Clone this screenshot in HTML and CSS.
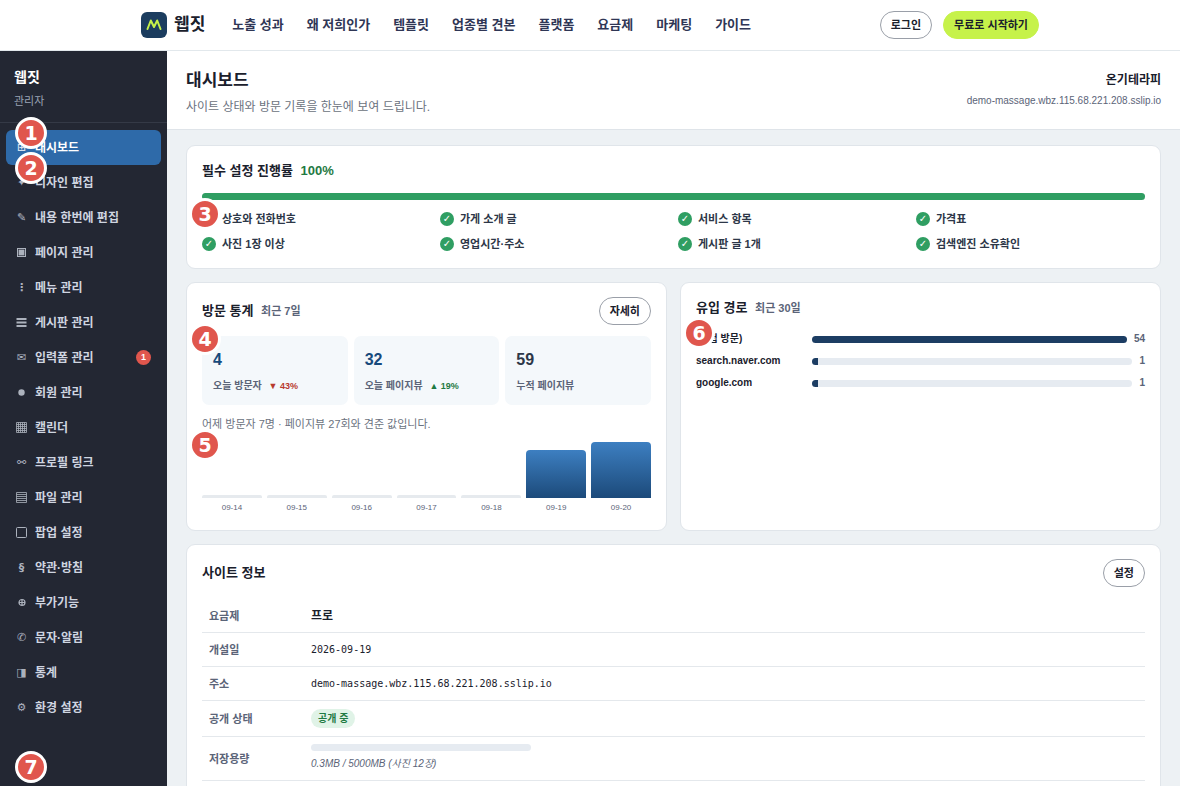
FILE: index.html
```html
<!DOCTYPE html>
<html lang="ko">
<head>
    <meta charset="UTF-8">
    <meta name="viewport" content="width=device-width, initial-scale=1.0">
    <title>대시보드 - 웹짓</title>
    <link rel="stylesheet" href="styles.css">
</head>
<body>
<header class="topbar">
    <div class="topbar-inner">
        <a class="brand" href="#">
            <svg class="brand-logo" viewBox="0 0 26 26" aria-hidden="true">
                <rect width="26" height="26" rx="6" fill="#1c3d5f"/>
                <path d="M6.5 17 L9.8 8.5 L13 15 L16.2 8.5 L19.5 17" fill="none" stroke="#c6f24a" stroke-width="2" stroke-linecap="round" stroke-linejoin="round"/>
            </svg>
            웹짓
        </a>
        <nav class="topnav">
            <a href="#">노출 성과</a>
            <a href="#">왜 저희인가</a>
            <a href="#">템플릿</a>
            <a href="#">업종별 견본</a>
            <a href="#">플랫폼</a>
            <a href="#">요금제</a>
            <a href="#">마케팅</a>
            <a href="#">가이드</a>
        </nav>
        <div class="topbar-actions">
            <a class="btn" href="#">로그인</a>
            <a class="btn btn-lime" href="#">무료로 시작하기</a>
        </div>
    </div>
</header>

<div class="layout">
    <aside class="sidebar">
        <div class="sidebar-head">
            <strong>웹짓</strong>
            <span>관리자</span>
        </div>
        <nav class="menu">
            <a class="active" href="#"><i>⊞</i>대시보드<b class="marker">1</b></a>
            <a href="#"><i>✦</i>디자인 편집<b class="marker">2</b></a>
            <a href="#"><i>✎</i>내용 한번에 편집</a>
            <a href="#">
                <i><svg viewBox="0 0 11 11"><rect x="1.5" y="1.5" width="8" height="8" fill="none" stroke="currentColor"/><rect x="2.6" y="2.6" width="5.8" height="5.8" fill="currentColor"/></svg></i>페이지 관리
            </a>
            <a href="#"><i>⋮</i>메뉴 관리</a>
            <a href="#">
                <i><svg viewBox="0 0 11 11"><path d="M.5 2h10M.5 5.5h10M.5 9h10" stroke="currentColor" stroke-width="2"/></svg></i>게시판 관리
            </a>
            <a href="#"><i>✉</i>입력폼 관리<span class="count">1</span></a>
            <a href="#">
                <i><svg viewBox="0 0 11 11"><circle cx="5.5" cy="5.5" r="3.2" fill="currentColor"/></svg></i>회원 관리
            </a>
            <a href="#">
                <i><svg viewBox="0 0 11 11"><path d="M.5 .5h10v10h-10zM2.5 .5v10M4.5 .5v10M6.5 .5v10M8.5 .5v10M.5 2.5h10M.5 4.5h10M.5 6.5h10M.5 8.5h10" fill="none" stroke="currentColor" stroke-width=".8"/></svg></i>캘린더
            </a>
            <a href="#"><i>⚯</i>프로필 링크</a>
            <a href="#">
                <i><svg viewBox="0 0 11 11"><path d="M.5 .5h10v10h-10zM.5 2.5h10M.5 4.5h10M.5 6.5h10M.5 8.5h10" fill="none" stroke="currentColor" stroke-width=".8"/></svg></i>파일 관리
            </a>
            <a href="#">
                <i><svg viewBox="0 0 11 11"><rect x=".5" y=".5" width="10" height="10" rx="1" fill="none" stroke="currentColor"/></svg></i>팝업 설정
            </a>
            <a href="#"><i>§</i>약관·방침</a>
            <a href="#">
                <i><svg viewBox="0 0 11 11"><path d="M9 5.5a3 3 0 1 1-6 0a3 3 0 1 1 6 0zM6 2.5v6M3 5.5h6" fill="none" stroke="currentColor" stroke-width="1.2"/></svg></i>부가기능
            </a>
            <a href="#"><i>✆</i>문자·알림</a>
            <a href="#"><i>◨</i>통계</a>
            <a href="#"><i>⚙</i>환경 설정</a>
        </nav>
        <div class="sidebar-foot"><b class="marker">7</b></div>
    </aside>

    <main class="main">
        <div class="page-head">
            <div>
                <h1>대시보드</h1>
                <p>사이트 상태와 방문 기록을 한눈에 보여 드립니다.</p>
            </div>
            <div class="site">
                <strong>온기테라피</strong>
                <a href="#">demo-massage.wbz.115.68.221.208.sslip.io</a>
            </div>
        </div>

        <div class="content">
            <section class="card">
                <h2>필수 설정 진행률 <em>100%</em></h2>
                <div class="progress"><div style="width: 100%"></div></div>
                <div class="anchor">
                    <ul class="checks">
                        <li>상호와 전화번호</li>
                        <li>가게 소개 글</li>
                        <li>서비스 항목</li>
                        <li>가격표</li>
                        <li>사진 1장 이상</li>
                        <li>영업시간·주소</li>
                        <li>게시판 글 1개</li>
                        <li>검색엔진 소유확인</li>
                    </ul>
                    <b class="marker">3</b>
                </div>
            </section>

            <div class="columns">
                <section class="card">
                    <div class="card-head">
                        <h2>방문 통계 <small>최근 7일</small></h2>
                        <a class="btn" href="#">자세히</a>
                    </div>
                    <div class="anchor">
                        <div class="stats">
                            <div class="stat">
                                <strong class="blue">4</strong>
                                <span>오늘 방문자 <em class="down">▼ 43%</em></span>
                            </div>
                            <div class="stat">
                                <strong class="blue">32</strong>
                                <span>오늘 페이지뷰 <em class="up">▲ 19%</em></span>
                            </div>
                            <div class="stat">
                                <strong>59</strong>
                                <span>누적 페이지뷰</span>
                            </div>
                        </div>
                        <b class="marker">4</b>
                    </div>
                    <p class="note">어제 방문자 7명 · 페이지뷰 27회와 견준 값입니다.</p>
                    <div class="anchor">
                        <div class="chart">
                            <div class="day"><div class="bar empty"></div><span>09-14</span></div>
                            <div class="day"><div class="bar empty"></div><span>09-15</span></div>
                            <div class="day"><div class="bar empty"></div><span>09-16</span></div>
                            <div class="day"><div class="bar empty"></div><span>09-17</span></div>
                            <div class="day"><div class="bar empty"></div><span>09-18</span></div>
                            <div class="day"><div class="bar" style="height: 48px"></div><span>09-19</span></div>
                            <div class="day"><div class="bar" style="height: 56px"></div><span>09-20</span></div>
                        </div>
                        <b class="marker">5</b>
                    </div>
                </section>

                <section class="card">
                    <h2>유입 경로 <small>최근 30일</small></h2>
                    <div class="anchor">
                        <ul class="sources">
                            <li><span>(직접 방문)</span><div class="track"><div style="width: 100%"></div></div><b>54</b></li>
                            <li><span>search.naver.com</span><div class="track"><div style="width: 2%"></div></div><b>1</b></li>
                            <li><span>google.com</span><div class="track"><div style="width: 2%"></div></div><b>1</b></li>
                        </ul>
                        <b class="marker">6</b>
                    </div>
                </section>
            </div>

            <section class="card">
                <div class="card-head">
                    <h2>사이트 정보</h2>
                    <a class="btn" href="#">설정</a>
                </div>
                <table class="info">
                    <tr><th scope="row">요금제</th><td><strong>프로</strong></td></tr>
                    <tr><th scope="row">개설일</th><td><code>2026-09-19</code></td></tr>
                    <tr><th scope="row">주소</th><td><code>demo-massage.wbz.115.68.221.208.sslip.io</code></td></tr>
                    <tr><th scope="row">공개 상태</th><td><span class="badge">공개 중</span></td></tr>
                    <tr><th scope="row">저장용량</th><td><div class="storage"></div><em>0.3MB / 5000MB (사진 12장)</em></td></tr>
                </table>
            </section>
        </div>
    </main>
</div>
</body>
</html>
```
FILE: styles.css
```css
* {
    margin: 0;
    padding: 0;
    box-sizing: border-box;
}
body {
    font-family: "Liberation Sans", "Noto Sans CJK KR", sans-serif;
    font-size: 12px;
    line-height: 18px;
    background: #edf1f4;
    color: #1a202c;
}
a {
    color: inherit;
    text-decoration: none;
}
ul {
    list-style: none;
}
em {
    font-style: normal;
}
.topbar {
    background: #fff;
    border-bottom: 1px solid #e2e8ec;
}
.topbar-inner {
    max-width: 898px;
    height: 50px;
    margin: 0 auto;
    display: flex;
    align-items: center;
}
.brand {
    display: flex;
    align-items: center;
    gap: 7px;
    margin-right: 27px;
    font-size: 17px;
    font-weight: bold;
    line-height: 26px;
}
.brand-logo {
    width: 26px;
    height: 26px;
}
.topnav {
    display: flex;
    gap: 23px;
    font-size: 13px;
    font-weight: bold;
    line-height: 20px;
    color: #2f3655;
    white-space: nowrap;
}
.topbar-actions {
    margin-left: auto;
    display: flex;
    gap: 11px;
}
.btn {
    height: 28px;
    padding: 0 10px;
    border: 1px solid #9a9fa8;
    border-radius: 14px;
    background: #fff;
    font-size: 11px;
    font-weight: bold;
    line-height: 26px;
    white-space: nowrap;
}
.btn-lime {
    background: #c6f24a;
    border-color: #c6f24a;
}
.layout {
    display: flex;
    min-height: calc(100vh - 51px);
}
.sidebar {
    width: 167px;
    flex-shrink: 0;
    background: #232733;
    color: #cfd5e0;
}
.sidebar-head {
    display: flex;
    flex-direction: column;
    gap: 6px;
    padding: 17px 14px 12px;
    border-bottom: 1px solid #343946;
}
.sidebar-head strong {
    font-size: 14px;
    color: #fff;
}
.sidebar-head span {
    font-size: 11px;
    color: #9aa3b5;
}
.menu {
    padding: 7px 6px 0;
}
.menu a {
    position: relative;
    display: flex;
    align-items: center;
    gap: 6px;
    height: 35px;
    padding: 0 10px 0 8px;
    border-radius: 6px;
    font-weight: bold;
}
.menu a.active {
    background: #2e6aa9;
    color: #fff;
}
.menu i {
    width: 15px;
    font-family: "DejaVu Sans", sans-serif;
    font-size: 11px;
    font-style: normal;
    text-align: center;
    opacity: 0.8;
}
.menu svg {
    display: block;
    width: 11px;
    height: 11px;
    margin: 0 auto;
}
.count {
    margin-left: auto;
    width: 15px;
    height: 15px;
    border-radius: 50%;
    background: #e0564d;
    color: #fff;
    font-size: 9px;
    line-height: 15px;
    text-align: center;
}
.sidebar-foot {
    position: relative;
    height: 22px;
    margin: 39px 6px 0;
}
.anchor {
    position: relative;
}
.marker {
    position: absolute;
    top: -13px;
    left: -13px;
    z-index: 2;
    width: 32px;
    height: 32px;
    border: 3px solid #fff;
    border-radius: 50%;
    background: #e0564d;
    color: #fff;
    font-family: "DejaVu Sans", sans-serif;
    font-size: 19px;
    font-weight: bold;
    line-height: 27px;
    text-align: center;
}
.sidebar .marker {
    left: 9px;
}
.main {
    flex: 1;
    min-width: 0;
}
.page-head {
    display: flex;
    justify-content: space-between;
    padding: 18px 19px 13px;
    background: #fff;
    border-bottom: 1px solid #dfe4e9;
}
.page-head h1 {
    font-size: 17px;
    line-height: 24px;
}
.page-head p {
    margin-top: 5px;
    color: #6b7280;
}
.site {
    display: flex;
    flex-direction: column;
    gap: 3px;
    padding-top: 2px;
    text-align: right;
}
.site a {
    font-size: 10px;
    color: #5b6478;
}
.content {
    display: flex;
    flex-direction: column;
    gap: 13px;
    padding: 15px 19px;
}
.card {
    background: #fff;
    border: 1px solid #e0e5ea;
    border-radius: 9px;
    padding: 14px 15px;
}
.card h2 {
    font-size: 13px;
    line-height: 22px;
}
.card h2 em {
    margin-left: 4px;
    color: #1f7a43;
}
.card h2 small {
    margin-left: 4px;
    font-size: 11px;
    color: #5b6478;
}
.card-head {
    display: flex;
    justify-content: space-between;
    align-items: center;
}
.progress {
    height: 7px;
    margin: 11px 0;
    border-radius: 4px;
    background: #e6ebf1;
}
.progress div {
    height: 100%;
    border-radius: 4px;
    background: #2f9e62;
}
.checks {
    display: grid;
    grid-template-columns: repeat(4, 1fr);
    gap: 9px;
    padding-bottom: 2px;
    font-size: 11px;
    font-weight: bold;
    line-height: 16px;
    color: #2d3748;
}
.checks li {
    display: flex;
    align-items: center;
    gap: 6px;
}
.checks li::before {
    content: "✓";
    width: 14px;
    height: 14px;
    border-radius: 50%;
    background: #2f9e62;
    color: #fff;
    font-family: "DejaVu Sans", sans-serif;
    font-size: 10px;
    line-height: 14px;
    text-align: center;
}
.columns {
    display: grid;
    grid-template-columns: 1fr 1fr;
    gap: 13px;
}
.stats {
    display: grid;
    grid-template-columns: repeat(3, 1fr);
    gap: 6px;
    margin-top: 11px;
}
.stat {
    padding: 13px 11px 10px;
    border-radius: 7px;
    background: #f4f8fb;
}
.stat strong {
    display: block;
    font-size: 16px;
    line-height: 22px;
    color: #2d3748;
}
.stat strong.blue {
    color: #174a7c;
}
.stat span {
    display: block;
    margin-top: 6px;
    font-size: 10px;
    font-weight: bold;
    color: #5b6478;
}
.stat em {
    margin-left: 4px;
    font-size: 9px;
}
.stat .up {
    color: #1f7a43;
}
.stat .down {
    color: #b83a2e;
}
.note {
    margin: 10px 0 9px;
    font-size: 11px;
    color: #6b7280;
}
.chart {
    display: flex;
    align-items: flex-end;
    gap: 5px;
    padding-bottom: 2px;
}
.day {
    flex: 1;
    text-align: center;
}
.day span {
    display: block;
    margin-top: 4px;
    font-size: 8px;
    line-height: 12px;
    color: #5b6478;
}
.bar {
    border-radius: 4px 4px 0 0;
    background: linear-gradient(#3d7fc1, #1c4a7a);
}
.bar.empty {
    height: 3px;
    border-radius: 2px 2px 0 0;
    background: #e6eaee;
}
.sources {
    display: flex;
    flex-direction: column;
    gap: 4px;
    margin-top: 11px;
}
.sources li {
    display: flex;
    align-items: center;
    gap: 7px;
    font-size: 10px;
    font-weight: bold;
}
.sources span {
    width: 109px;
}
.sources li b {
    color: #5b6478;
}
.track {
    flex: 1;
    height: 7px;
    border-radius: 4px;
    background: #e6ebf1;
    overflow: hidden;
}
.track div {
    height: 100%;
    background: #1c3d63;
}
.info {
    width: 100%;
    margin-top: 13px;
    border-collapse: collapse;
}
.info tr {
    border-bottom: 1px solid #e4e8ec;
}
.info th {
    width: 102px;
    padding: 7px;
    font-size: 11px;
    text-align: left;
    color: #5b6478;
}
.info td {
    padding: 7px;
}
.info code {
    font-family: "DejaVu Sans Mono", monospace;
    font-size: 10px;
}
.info em {
    display: block;
    font-size: 10px;
    font-style: italic;
    color: #5b6478;
}
.badge {
    display: inline-block;
    margin: 1px 0;
    padding: 0 7px;
    border-radius: 10px;
    background: #e0f3e7;
    color: #1f7a43;
    font-size: 10px;
    font-weight: bold;
    line-height: 19px;
}
.storage {
    max-width: 220px;
    height: 7px;
    margin-bottom: 4px;
    border-radius: 4px;
    background: #e6ebf1;
}
```
